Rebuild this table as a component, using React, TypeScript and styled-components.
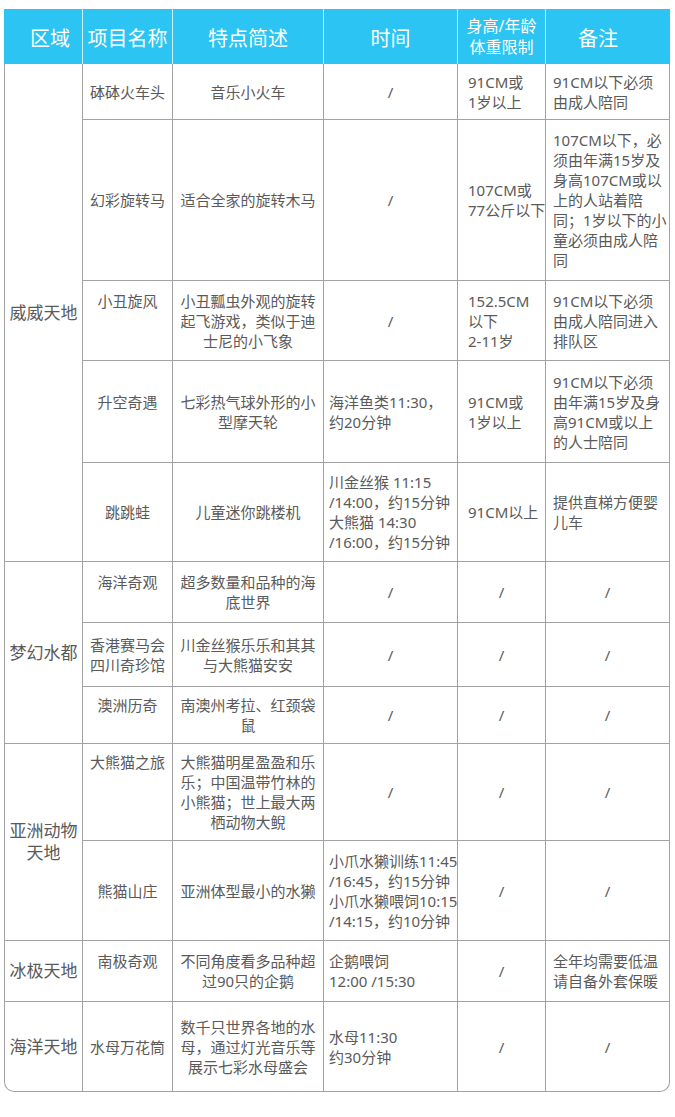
import React from "react";
import styled, { createGlobalStyle } from "styled-components";

interface Ride {
  name: string[];
  desc: string[];
  time: string[];
  limit: string[];
  note: string[];
  height: number;
  nameTop?: boolean;
}

interface Zone {
  title: string[];
  rides: Ride[];
}

const zones: Zone[] = [
  {
    title: ["威威天地"],
    rides: [
      {
        name: ["砵砵火车头"],
        desc: ["音乐小火车"],
        time: ["/"],
        limit: ["91CM或", "1岁以上"],
        note: ["91CM以下必须", "由成人陪同"],
        height: 56,
      },
      {
        name: ["幻彩旋转马"],
        desc: ["适合全家的旋转木马"],
        time: ["/"],
        limit: ["107CM或", "77公斤以下"],
        note: [
          "107CM以下，必",
          "须由年满15岁及",
          "身高107CM或以",
          "上的人站着陪",
          "同；1岁以下的小",
          "童必须由成人陪",
          "同",
        ],
        height: 161,
      },
      {
        name: ["小丑旋风"],
        desc: ["小丑瓢虫外观的旋转", "起飞游戏，类似于迪", "士尼的小飞象"],
        time: ["/"],
        limit: ["152.5CM", "以下", "2-11岁"],
        note: ["91CM以下必须", "由成人陪同进入", "排队区"],
        height: 80,
        nameTop: true,
      },
      {
        name: ["升空奇遇"],
        desc: ["七彩热气球外形的小", "型摩天轮"],
        time: ["海洋鱼类11:30，", "约20分钟"],
        limit: ["91CM或", "1岁以上"],
        note: ["91CM以下必须", "由年满15岁及身", "高91CM或以上", "的人士陪同"],
        height: 102,
        nameTop: true,
      },
      {
        name: ["跳跳蛙"],
        desc: ["儿童迷你跳楼机"],
        time: ["川金丝猴 11:15", "/14:00，约15分钟", "大熊猫 14:30", "/16:00，约15分钟"],
        limit: ["91CM以上"],
        note: ["提供直梯方便婴", "儿车"],
        height: 99,
      },
    ],
  },
  {
    title: ["梦幻水都"],
    rides: [
      {
        name: ["海洋奇观"],
        desc: ["超多数量和品种的海", "底世界"],
        time: ["/"],
        limit: ["/"],
        note: ["/"],
        height: 61,
        nameTop: true,
      },
      {
        name: ["香港赛马会", "四川奇珍馆"],
        desc: ["川金丝猴乐乐和其其", "与大熊猫安安"],
        time: ["/"],
        limit: ["/"],
        note: ["/"],
        height: 64,
      },
      {
        name: ["澳洲历奇"],
        desc: ["南澳州考拉、红颈袋", "鼠"],
        time: ["/"],
        limit: ["/"],
        note: ["/"],
        height: 57,
        nameTop: true,
      },
    ],
  },
  {
    title: ["亚洲动物", "天地"],
    rides: [
      {
        name: ["大熊猫之旅"],
        desc: ["大熊猫明星盈盈和乐", "乐；中国温带竹林的", "小熊猫；世上最大两", "栖动物大鲵"],
        time: ["/"],
        limit: ["/"],
        note: ["/"],
        height: 97,
        nameTop: true,
      },
      {
        name: ["熊猫山庄"],
        desc: ["亚洲体型最小的水獭"],
        time: ["小爪水獭训练11:45", "/16:45，约15分钟", "小爪水獭喂饲10:15", "/14:15，约10分钟"],
        limit: ["/"],
        note: ["/"],
        height: 100,
      },
    ],
  },
  {
    title: ["冰极天地"],
    rides: [
      {
        name: ["南极奇观"],
        desc: ["不同角度看多品种超", "过90只的企鹅"],
        time: ["企鹅喂饲", "12:00 /15:30"],
        limit: ["/"],
        note: ["全年均需要低温", "请自备外套保暖"],
        height: 61,
        nameTop: true,
      },
    ],
  },
  {
    title: ["海洋天地"],
    rides: [
      {
        name: ["水母万花筒"],
        desc: ["数千只世界各地的水", "母，通过灯光音乐等", "展示七彩水母盛会"],
        time: ["水母11:30", "约30分钟"],
        limit: ["/"],
        note: ["/"],
        height: 89,
      },
    ],
  },
];

const GlobalStyle = createGlobalStyle`
  body {
    margin: 0;
    background: #ffffff;
    font-family: "Noto Sans", "Noto Sans CJK SC", sans-serif;
  }
`;

const Page = styled.div`
  padding: 9px 0 0 4px;
  width: 666px;
`;

const HeaderRow = styled.div`
  display: grid;
  grid-template-columns: 79px 90px 151px 134px 88px 124px;
  height: 55px;
  background: #2cc4f3;
`;

const HeadCell = styled.div<{ $shift?: number; $small?: boolean; $last?: boolean }>`
  display: flex;
  flex-direction: column;
  align-items: center;
  justify-content: center;
  padding-left: ${(p) => (p.$shift && p.$shift > 0 ? p.$shift : 0)}px;
  padding-right: ${(p) => (p.$shift && p.$shift < 0 ? -p.$shift : 0)}px;
  padding-top: ${(p) => (p.$small ? 0 : 5)}px;
  border-right: ${(p) => (p.$last ? "none" : "1px solid rgba(255, 255, 255, 0.75)")};
  color: #ffffff;
  font-size: ${(p) => (p.$small ? "16px" : "20px")};
  line-height: ${(p) => (p.$small ? "21px" : "22px")};
  white-space: nowrap;
`;

const Body = styled.div<{ $rows: string }>`
  display: grid;
  grid-template-columns: 78px 90px 151px 134px 88px 123px;
  grid-template-rows: ${(p) => p.$rows};
  border: 1px solid #a2a2a2;
  border-top: none;
  border-radius: 0 0 10px 10px;
  overflow: hidden;
  color: #5a5a5a;
`;

const Cell = styled.div<{
  $left?: boolean;
  $pad?: number;
  $lift?: number;
  $span?: number;
  $zone?: boolean;
  $noBottom?: boolean;
  $noRight?: boolean;
}>`
  display: flex;
  flex-direction: column;
  justify-content: center;
  align-items: ${(p) => (p.$left ? "flex-start" : "center")};
  text-align: ${(p) => (p.$left ? "left" : "center")};
  padding: 0 0 ${(p) => p.$lift || 0}px ${(p) => (p.$left ? p.$pad || 0 : 0)}px;
  grid-row: ${(p) => (p.$span ? `span ${p.$span}` : "auto")};
  border-right: ${(p) => (p.$noRight ? "none" : "1px solid #a2a2a2")};
  border-bottom: ${(p) => (p.$noBottom ? "none" : "1px solid #a2a2a2")};
  font-size: ${(p) => (p.$zone ? "17px" : "15px")};
  line-height: ${(p) => (p.$zone ? "22px" : "20px")};
  white-space: nowrap;
`;

const Line = styled.span`
  display: block;
`;

const Lines: React.FC<{ lines: string[] }> = ({ lines }) => (
  <>
    {lines.map((l, i) => (
      <Line key={i}>{l}</Line>
    ))}
  </>
);

const isSlash = (lines: string[]) => lines.length === 1 && lines[0] === "/";

export default function App() {
  const allRides = zones.flatMap((z) => z.rides);
  const rows = allRides.map((r) => `${r.height}px`).join(" ");

  return (
    <>
      <GlobalStyle />
      <Page>
        <HeaderRow>
          <HeadCell $shift={14}>区域</HeadCell>
          <HeadCell>项目名称</HeadCell>
          <HeadCell>特点简述</HeadCell>
          <HeadCell>时间</HeadCell>
          <HeadCell $small>
            <Line>身高/年龄</Line>
            <Line>体重限制</Line>
          </HeadCell>
          <HeadCell $shift={-20} $last>
            备注
          </HeadCell>
        </HeaderRow>
        <Body $rows={rows}>
          {zones.map((zone, zi) => {
            const lastZone = zi === zones.length - 1;
            return (
              <React.Fragment key={zi}>
                <Cell $span={zone.rides.length} $zone $noBottom={lastZone}>
                  <Lines lines={zone.title} />
                </Cell>
                {zone.rides.map((ride, ri) => {
                  const last = lastZone && ri === zone.rides.length - 1;
                  const lift = ride.nameTop ? (ride.desc.length - 1) * 20 : 0;
                  return (
                    <React.Fragment key={ri}>
                      <Cell $lift={lift} $noBottom={last}>
                        <Lines lines={ride.name} />
                      </Cell>
                      <Cell $noBottom={last}>
                        <Lines lines={ride.desc} />
                      </Cell>
                      <Cell $left={!isSlash(ride.time)} $pad={5} $noBottom={last}>
                        <Lines lines={ride.time} />
                      </Cell>
                      <Cell $left={!isSlash(ride.limit)} $pad={10} $noBottom={last}>
                        <Lines lines={ride.limit} />
                      </Cell>
                      <Cell $left={!isSlash(ride.note)} $pad={7} $noBottom={last} $noRight>
                        <Lines lines={ride.note} />
                      </Cell>
                    </React.Fragment>
                  );
                })}
              </React.Fragment>
            );
          })}
        </Body>
      </Page>
    </>
  );
}
